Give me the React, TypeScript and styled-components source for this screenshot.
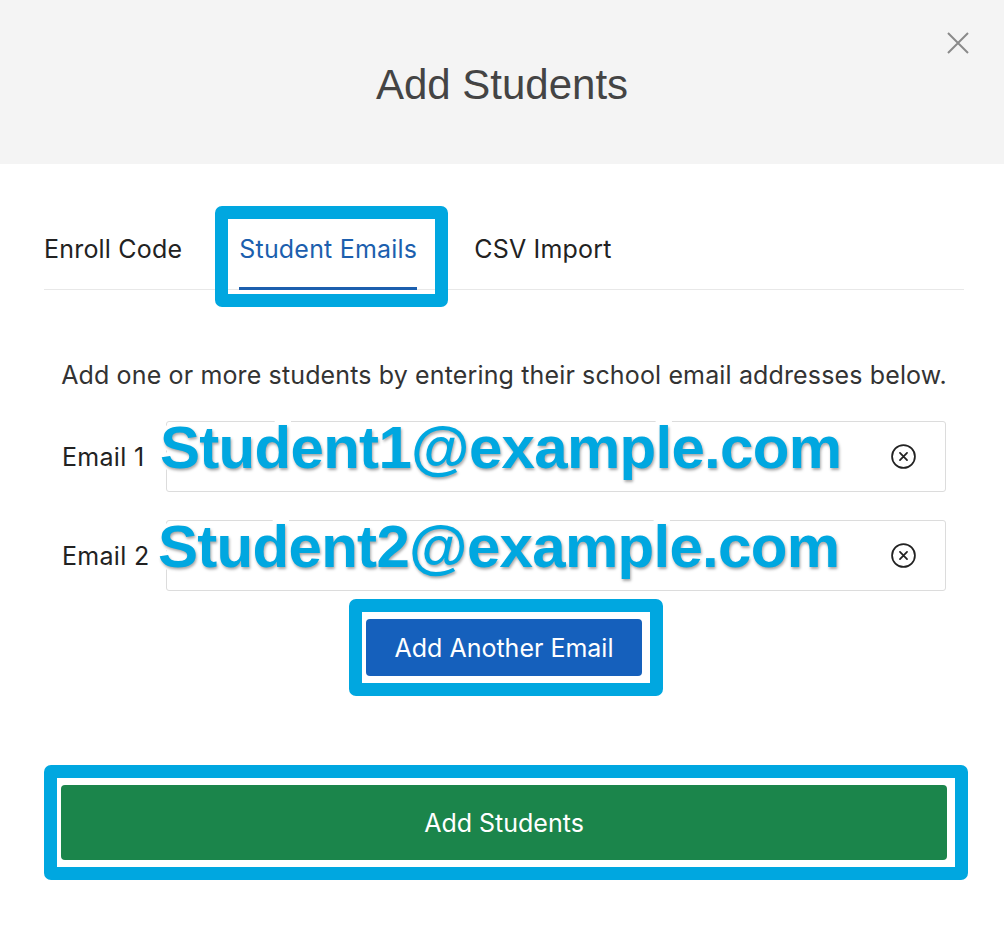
import React from "react";
import styled, { createGlobalStyle } from "styled-components";

const Cyan = "#00a7e0";

const GlobalStyle = createGlobalStyle`
  html, body {
    margin: 0;
    padding: 0;
    background: #fff;
  }
  body {
    font-family: Inter, "Noto Sans", sans-serif;
    color: #222;
  }
`;

const tabs = ["Enroll Code", "Student Emails", "CSV Import"];
const emails = ["Student1@example.com", "Student2@example.com"];

export default function App() {
  return (
    <>
      <GlobalStyle />
      <S.Modal>
        <S.Header>
          <S.Title>Add Students</S.Title>
          <S.Close aria-label="Close">
            <svg width="22" height="22" viewBox="0 0 22 22">
              <path d="M1 1 L21 21 M21 1 L1 21" stroke="#8a8a8a" strokeWidth="2" fill="none" />
            </svg>
          </S.Close>
        </S.Header>
        <S.Body>
          <S.Tabs>
            {tabs.map((t) => (
              <S.Tab key={t} $active={t === "Student Emails"}>
                {t}
                {t === "Student Emails" && <Highlight $top={42} $right={-31} $bottom={-20} $left={-24} />}
              </S.Tab>
            ))}
          </S.Tabs>
          <S.Intro>Add one or more students by entering their school email addresses below.</S.Intro>
          <S.Rows>
            {emails.map((email, index) => (
              <S.Row key={index}>
                <S.Label>Email {index + 1}</S.Label>
                <S.Field>
                  <S.Input type="email" aria-label={`Email ${index + 1}`} />
                  <ClearIcon />
                </S.Field>
                <Callout $left={index === 0 ? 98 : 96}>{email}</Callout>
              </S.Row>
            ))}
          </S.Rows>
          <S.Center>
            <ActionButton $color="#1560bc" $width={276} $height={57}>
              Add Another Email
              <Highlight $top={-20} $right={-21} $bottom={-20} $left={-17} />
            </ActionButton>
          </S.Center>
          <S.Footer>
            <ActionButton $color="#1b854b" $width={886} $height={75}>
              Add Students
              <Highlight $top={-20} $right={-21} $bottom={-20} $left={-17} />
            </ActionButton>
          </S.Footer>
        </S.Body>
      </S.Modal>
    </>
  );
}

const ClearIcon = () => (
  <svg width="27" height="27" viewBox="0 0 26 26">
    <circle cx="13" cy="13" r="11" stroke="#222" strokeWidth="1.7" fill="none" />
    <path d="M9.6 9.6 L16.4 16.4 M16.4 9.6 L9.6 16.4" stroke="#222" strokeWidth="1.7" strokeLinecap="round" />
  </svg>
);

const S = {
  Modal: styled.div`
    width: 1004px;
    min-height: 934px;
    background: #fff;
  `,
  Header: styled.div`
    position: relative;
    height: 164px;
    box-sizing: border-box;
    padding-top: 6px;
    background: #f4f4f4;
    display: flex;
    align-items: center;
    justify-content: center;
  `,
  Title: styled.h1`
    margin: 0;
    font-family: "Liberation Sans", Arial, sans-serif;
    font-size: 42px;
    font-weight: 400;
    color: #444;
  `,
  Close: styled.button`
    position: absolute;
    top: 32px;
    right: 35px;
    border: none;
    background: none;
    padding: 0;
    line-height: 0;
    cursor: pointer;
  `,
  Body: styled.div`
    padding: 0 40px 0 44px;
  `,
  Tabs: styled.div`
    display: flex;
    gap: 57px;
    border-bottom: 1px solid #e8e8e8;
  `,
  Tab: styled.div<{ $active?: boolean }>`
    position: relative;
    padding: 70px 0 23px;
    font-size: 25px;
    line-height: 30px;
    letter-spacing: 0.2px;
    color: ${(p) => (p.$active ? "#1c5fae" : "#222")};
    border-bottom: 3px solid ${(p) => (p.$active ? "#1c5fae" : "transparent")};
    margin-bottom: -1px;
  `,
  Intro: styled.p`
    margin: 70px 0 0;
    text-align: center;
    font-size: 25px;
    line-height: 30px;
    letter-spacing: 0.14px;
    color: #333;
  `,
  Rows: styled.div`
    margin-top: 31px;
    padding: 0 18px;
    display: flex;
    flex-direction: column;
    gap: 28px;
  `,
  Row: styled.div`
    position: relative;
    display: flex;
    align-items: center;
  `,
  Label: styled.label`
    width: 104px;
    flex: none;
    font-size: 25px;
    letter-spacing: 0.3px;
    color: #222;
  `,
  Field: styled.div`
    flex: 1;
    height: 71px;
    box-sizing: border-box;
    border: 1px solid #dcdcdc;
    border-radius: 3px;
    display: flex;
    align-items: center;
    padding: 0 28px 0 16px;
  `,
  Input: styled.input`
    flex: 1;
    border: none;
    outline: none;
    background: transparent;
    font-family: inherit;
    font-size: 22px;
  `,
  Center: styled.div`
    display: flex;
    justify-content: center;
    margin-top: 28px;
  `,
  Footer: styled.div`
    margin-top: 109px;
    padding-left: 17px;
  `,
};

const ActionButton = styled.button<{ $color: string; $width: number; $height: number }>`
  position: relative;
  width: ${(p) => p.$width}px;
  height: ${(p) => p.$height}px;
  border: none;
  border-radius: 4px;
  background: ${(p) => p.$color};
  color: #fff;
  font-family: Inter, "Noto Sans", sans-serif;
  font-size: 25px;
  cursor: pointer;
`;

const Highlight = styled.span<{ $top: number; $right: number; $bottom: number; $left: number }>`
  position: absolute;
  top: ${(p) => p.$top}px;
  right: ${(p) => p.$right}px;
  bottom: ${(p) => p.$bottom}px;
  left: ${(p) => p.$left}px;
  border: 13px solid ${Cyan};
  border-radius: 7px;
  pointer-events: none;
`;

const Callout = styled.span<{ $left: number }>`
  position: absolute;
  top: -3px;
  left: ${(p) => p.$left}px;
  font-family: "Liberation Sans", Arial, sans-serif;
  font-weight: 700;
  font-size: 60px;
  line-height: 60px;
  letter-spacing: -0.7px;
  white-space: nowrap;
  color: ${Cyan};
  -webkit-text-stroke: 8px #fff;
  paint-order: stroke fill;
  text-shadow: 1px 2px 3px rgba(0, 0, 0, 0.35);
  pointer-events: none;
`;
